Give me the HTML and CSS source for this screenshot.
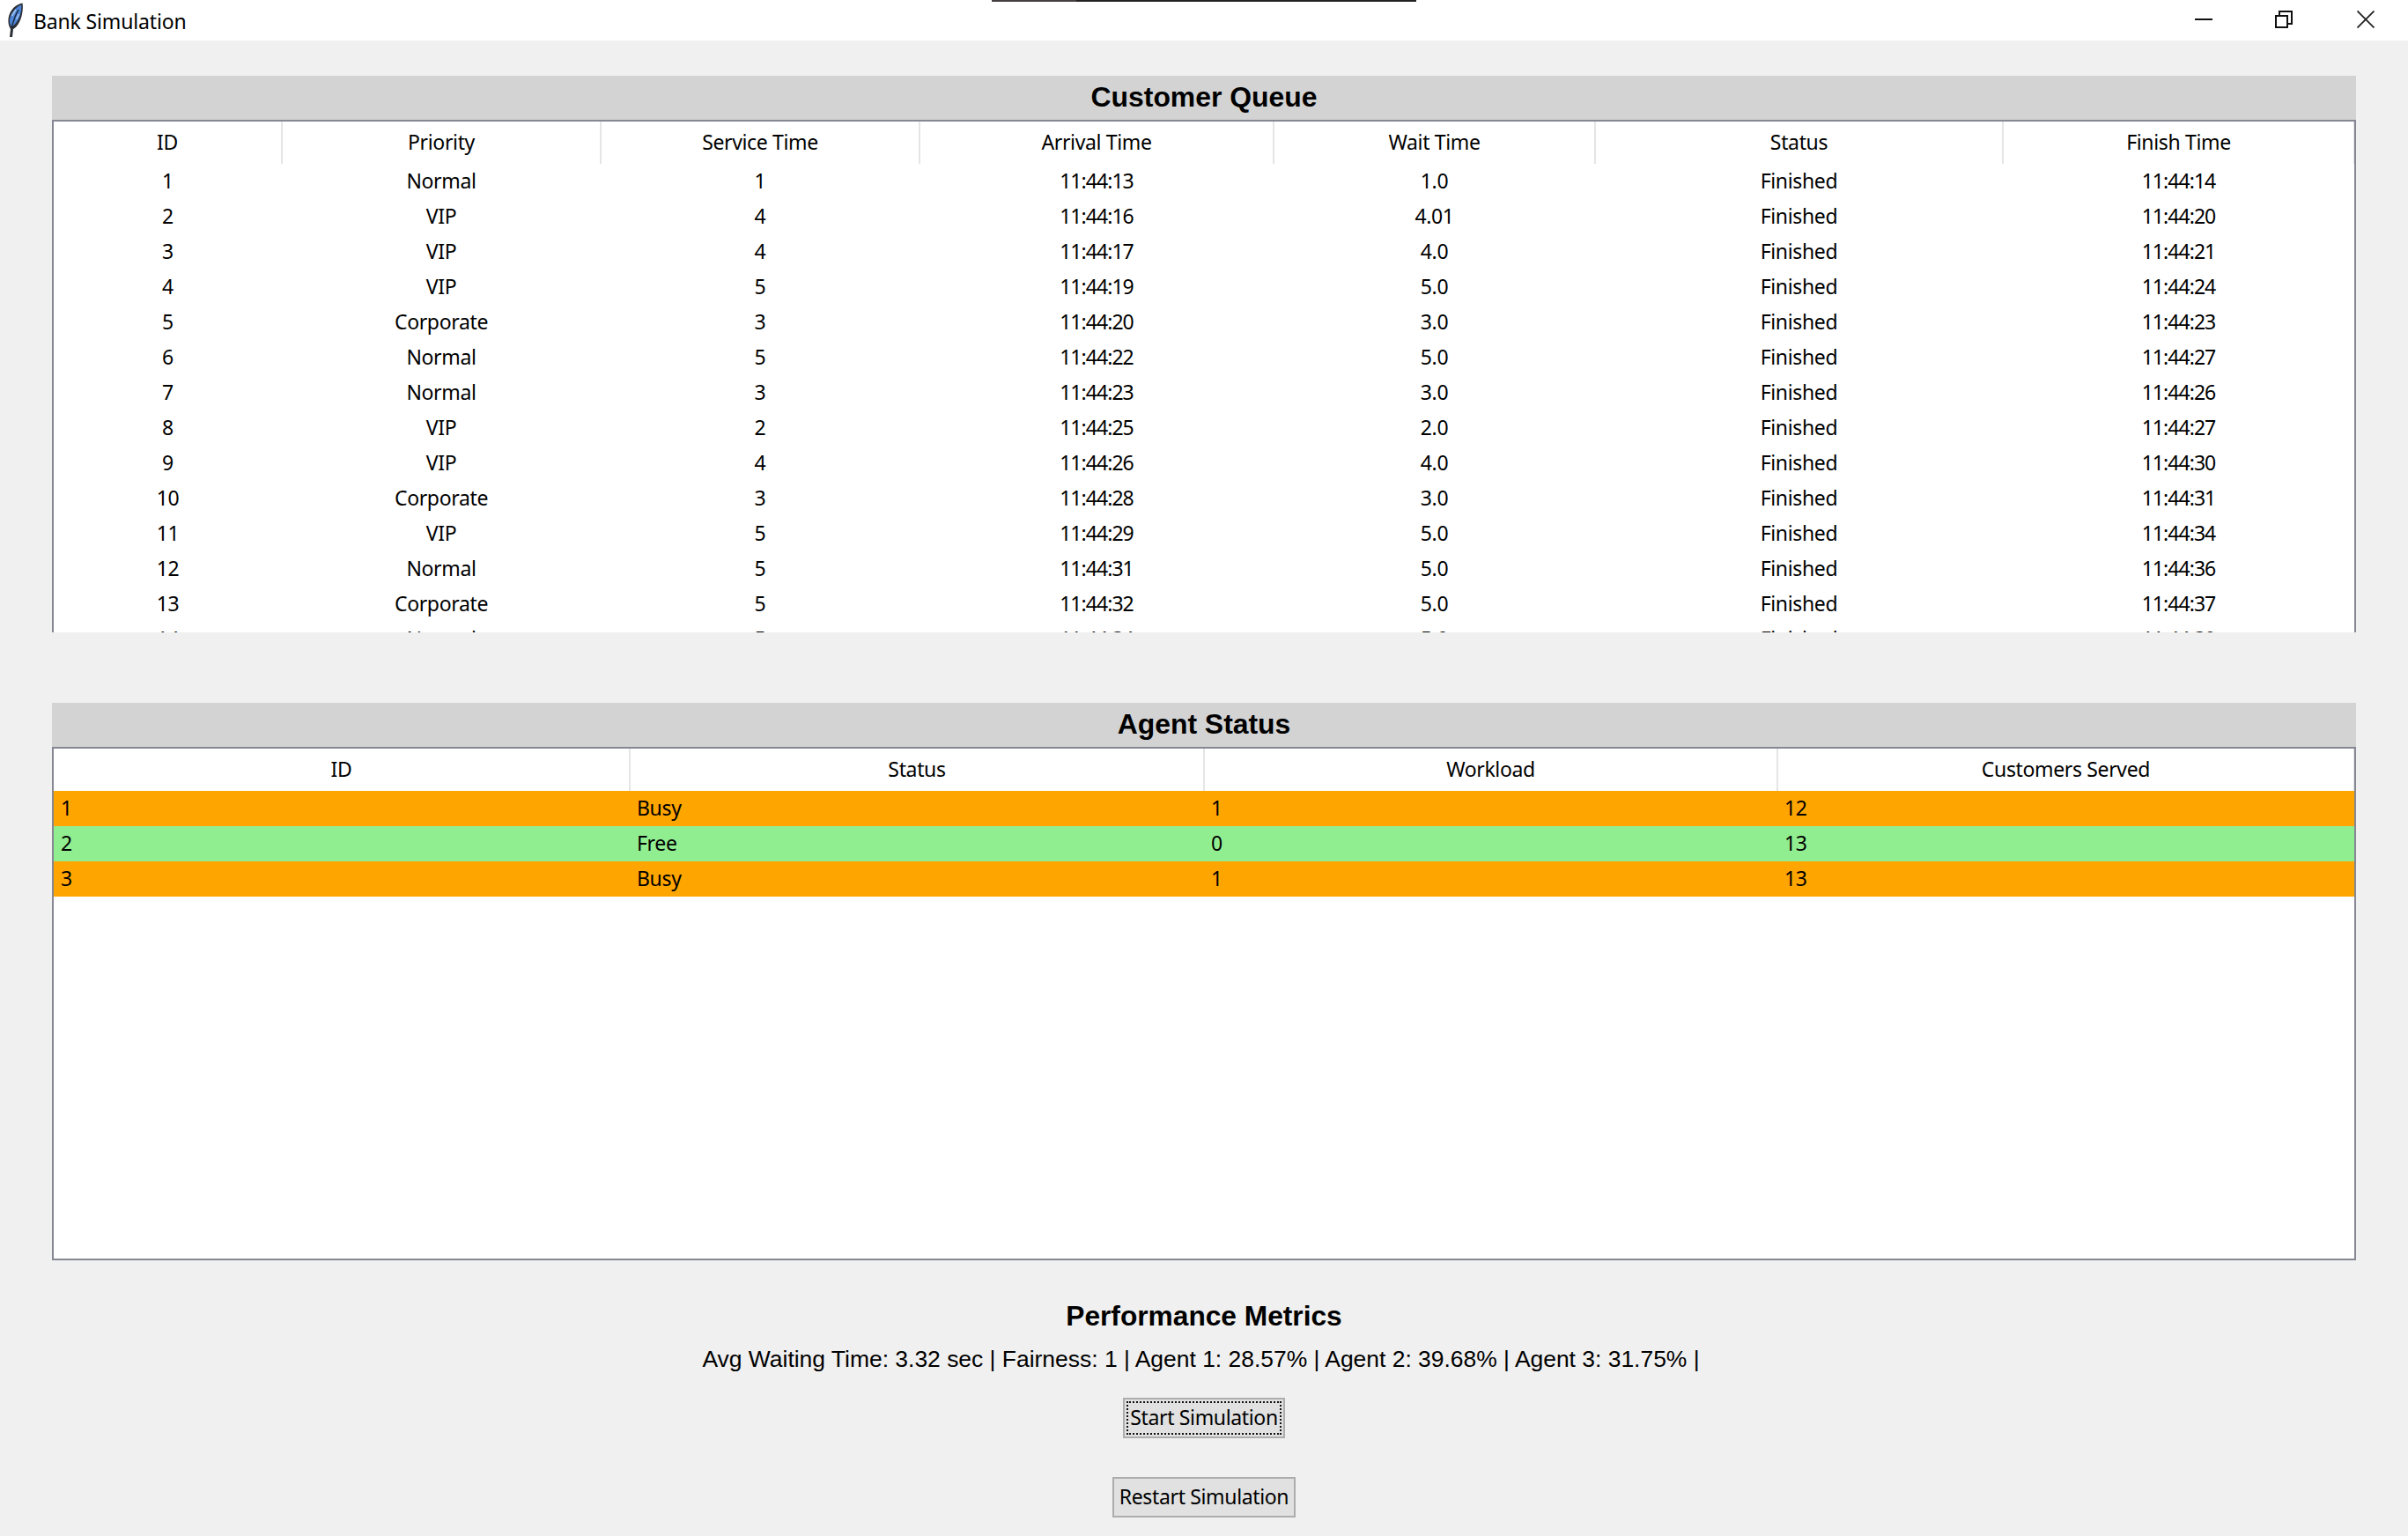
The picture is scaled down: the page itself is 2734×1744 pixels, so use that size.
FILE: index.html
```html
<!DOCTYPE html>
<html lang="en">
<head>
<meta charset="utf-8">
<title>Bank Simulation</title>
<link rel="stylesheet" href="styles.css">
</head>
<body>
<div class="notch"><span class="notch-a"></span><span class="notch-b"></span></div>
<header class="titlebar">
  <div class="app">
    <svg class="feather" width="20" height="40" viewBox="0 0 20 40" aria-hidden="true">
      <path d="M18.500 0.500C11 2 4 8 2.500 18C2 23 3 27 5 30L4 39L7 39L8 30C13.500 27 17.500 19 18.500 10C19 6 19 3 18.500 0.500Z" fill="#2b2f36"/>
      <path d="M17.300 2.500C11 5 5.500 11 4 19C3.600 22 4.500 25 6 27.500C11.500 24.500 15.800 17 16.800 10C17.200 7 17.300 5 17.300 2.500Z" fill="#4d84d6"/>
      <path d="M14 8C11 13 8.500 19 6.500 28" stroke="#16202e" stroke-width="1.300" fill="none"/>
      <path d="M11 8L6.500 15M14.500 13L11.500 19" stroke="#a9c6ee" stroke-width="1.500" fill="none"/>
    </svg>
    <span class="app-name">Bank Simulation</span>
  </div>
  <div class="controls">
    <span class="ctl"><svg width="20" height="20" viewBox="0 0 20 20" aria-hidden="true"><path d="M0 10H20" stroke="#111" stroke-width="2"/></svg></span>
    <span class="ctl"><svg width="20" height="20" viewBox="0 0 20 20" aria-hidden="true"><path d="M1 6H14V19H1Z M5 6V1H19V15H14" stroke="#111" stroke-width="2" fill="none"/></svg></span>
    <span class="ctl"><svg width="20" height="20" viewBox="0 0 20 20" aria-hidden="true"><path d="M0.500 0.500L19.500 19.500M19.500 0.500L0.500 19.500" stroke="#222" stroke-width="1.800" fill="none"/></svg></span>
  </div>
</header>
<main class="main">
  <section class="panel">
    <h2 class="panel-title">Customer Queue</h2>
    <div class="frame frame-queue">
      <table class="grid">
        <colgroup><col class="q1"><col class="q2"><col class="q3"><col class="q4"><col class="q5"><col class="q6"><col class="q7"></colgroup>
        <thead><tr><th>ID</th><th>Priority</th><th>Service Time</th><th>Arrival Time</th><th>Wait Time</th><th>Status</th><th>Finish Time</th></tr></thead>
        <tbody>
          <tr><td>1</td><td>Normal</td><td>1</td><td class="time">11:44:13</td><td>1.0</td><td>Finished</td><td class="time">11:44:14</td></tr>
          <tr><td>2</td><td>VIP</td><td>4</td><td class="time">11:44:16</td><td>4.01</td><td>Finished</td><td class="time">11:44:20</td></tr>
          <tr><td>3</td><td>VIP</td><td>4</td><td class="time">11:44:17</td><td>4.0</td><td>Finished</td><td class="time">11:44:21</td></tr>
          <tr><td>4</td><td>VIP</td><td>5</td><td class="time">11:44:19</td><td>5.0</td><td>Finished</td><td class="time">11:44:24</td></tr>
          <tr><td>5</td><td>Corporate</td><td>3</td><td class="time">11:44:20</td><td>3.0</td><td>Finished</td><td class="time">11:44:23</td></tr>
          <tr><td>6</td><td>Normal</td><td>5</td><td class="time">11:44:22</td><td>5.0</td><td>Finished</td><td class="time">11:44:27</td></tr>
          <tr><td>7</td><td>Normal</td><td>3</td><td class="time">11:44:23</td><td>3.0</td><td>Finished</td><td class="time">11:44:26</td></tr>
          <tr><td>8</td><td>VIP</td><td>2</td><td class="time">11:44:25</td><td>2.0</td><td>Finished</td><td class="time">11:44:27</td></tr>
          <tr><td>9</td><td>VIP</td><td>4</td><td class="time">11:44:26</td><td>4.0</td><td>Finished</td><td class="time">11:44:30</td></tr>
          <tr><td>10</td><td>Corporate</td><td>3</td><td class="time">11:44:28</td><td>3.0</td><td>Finished</td><td class="time">11:44:31</td></tr>
          <tr><td>11</td><td>VIP</td><td>5</td><td class="time">11:44:29</td><td>5.0</td><td>Finished</td><td class="time">11:44:34</td></tr>
          <tr><td>12</td><td>Normal</td><td>5</td><td class="time">11:44:31</td><td>5.0</td><td>Finished</td><td class="time">11:44:36</td></tr>
          <tr><td>13</td><td>Corporate</td><td>5</td><td class="time">11:44:32</td><td>5.0</td><td>Finished</td><td class="time">11:44:37</td></tr>
          <tr><td>14</td><td>Normal</td><td>5</td><td class="time">11:44:34</td><td>5.0</td><td>Finished</td><td class="time">11:44:39</td></tr>
        </tbody>
      </table>
    </div>
  </section>
  <section class="panel panel-agents">
    <h2 class="panel-title">Agent Status</h2>
    <div class="frame frame-agents">
      <table class="grid grid-agents">
        <colgroup><col class="a1"><col class="a2"><col class="a3"><col class="a4"></colgroup>
        <thead><tr><th>ID</th><th>Status</th><th>Workload</th><th>Customers Served</th></tr></thead>
        <tbody>
          <tr class="busy"><td>1</td><td>Busy</td><td>1</td><td>12</td></tr>
          <tr class="free"><td>2</td><td>Free</td><td>0</td><td>13</td></tr>
          <tr class="busy"><td>3</td><td>Busy</td><td>1</td><td>13</td></tr>
        </tbody>
      </table>
    </div>
  </section>
  <section class="metrics">
    <h2 class="metrics-title">Performance Metrics</h2>
    <p class="metrics-text">Avg Waiting Time: 3.32 sec | Fairness: 1 | Agent 1: 28.57% | Agent 2: 39.68% | Agent 3: 31.75% |</p>
    <button class="btn btn-start" type="button"><span class="focus">Start Simulation</span></button>
    <button class="btn btn-restart" type="button">Restart Simulation</button>
  </section>
</main>
</body>
</html>
```
FILE: styles.css
```css
* { box-sizing: border-box; }
html, body { margin: 0; height: 100%; }
body {
  position: relative;
  background: #f0f0f0;
  color: #000;
  font-family: "Noto Sans", "Open Sans", sans-serif;
  overflow: hidden;
}
.notch {
  position: absolute;
  top: 0;
  left: 1126px;
  display: flex;
  width: 482px;
  height: 2px;
}
.notch-a { width: 96px; background: #453f3f; }
.notch-b { flex: 1; background: #222; }
.titlebar {
  height: 46px;
  background: #fff;
  display: flex;
  align-items: center;
  justify-content: space-between;
}
.app { display: flex; align-items: center; padding-left: 7px; }
.feather { margin-right: 11px; }
.app-name { font-size: 23px; letter-spacing: -0.15px; padding-top: 2px; }
.controls { display: flex; padding-right: 2px; }
.ctl { width: 92px; height: 46px; display: flex; align-items: center; justify-content: center; }
.ctl svg { display: block; margin-top: -3px; }
.ctl:nth-child(2) svg { margin-left: -2px; }
.main { padding: 40px 59px 0; }
.panel-title {
  margin: 0;
  height: 50px;
  background: #d3d3d3;
  text-align: center;
  font: bold 31.900px/48px "Liberation Sans", Arial, sans-serif;
}
.frame {
  background: #fff;
  border: 2px solid #858793;
  overflow: hidden;
}
.frame-queue { height: 582px; border-bottom: 0; }
.frame-agents { height: 583px; }
.panel-agents { margin-top: 80px; }
.grid {
  width: 100%;
  table-layout: fixed;
  border-collapse: collapse;
  font-size: 23px;
  letter-spacing: -0.35px;
}
.q1 { width: 259px; }
.q2, .q3 { width: 362px; }
.q4 { width: 402px; }
.q5 { width: 365px; }
.q6 { width: 463px; }
.q7 { width: 399px; }
.a1 { width: 654px; }
.a2 { width: 652px; }
.a3 { width: 651px; }
.a4 { width: 655px; }
.grid th {
  height: 48px;
  padding: 0 0 3px;
  font-weight: 400;
  text-align: center;
  border-right: 2px solid #e5e5e5;
}
.grid td {
  height: 40px;
  padding: 0 0 3px;
  text-align: center;
  white-space: nowrap;
}
.grid .time { letter-spacing: -0.95px; }
.grid-agents td { text-align: left; padding-left: 8px; }
.busy { background: #ffa500; }
.free { background: #90ee90; }
.metrics {
  display: flex;
  flex-direction: column;
  align-items: center;
}
.metrics-title {
  margin: 39px 0 0;
  height: 48px;
  font: bold 31.700px/48px "Liberation Sans", Arial, sans-serif;
}
.metrics-text {
  margin: 2px 0 0;
  padding-right: 7px;
  height: 46px;
  font: 26.450px/46px "Liberation Sans", Arial, sans-serif;
}
.btn {
  height: 46px;
  padding: 0 0 2px;
  background: #e1e1e1;
  border: 2px solid #adadad;
  border-radius: 0;
  color: #000;
  font-family: "Noto Sans", "Open Sans", sans-serif;
  font-size: 23px;
  letter-spacing: -0.35px;
}
.btn-start { width: 184px; margin-top: 21px; padding: 2px; }
.focus {
  display: flex;
  align-items: center;
  justify-content: center;
  height: 100%;
  padding-bottom: 2px;
  border: 2px dotted #111;
}
.btn-restart { width: 208px; margin-top: 44px; }
```
